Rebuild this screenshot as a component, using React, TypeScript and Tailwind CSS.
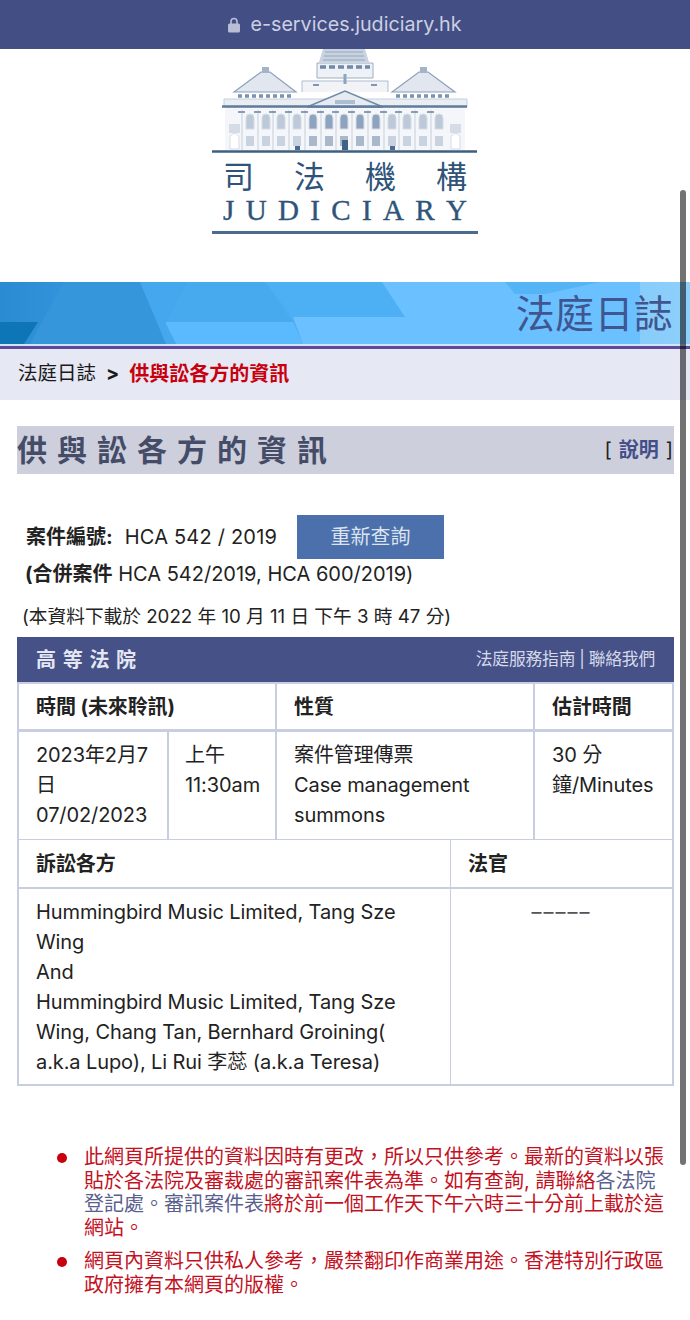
const windows = [250, 266, 281, 297, 313, 329, 344, 360, 376, 392, 407, 423, 439];

function BuildingLogo() {
  return (
    <svg width="266" height="104" viewBox="212 49 266 104" className="block blur-[0.35px]">
      {/* Dome */}
      <path d="M323 49h42l4 13h-50z" fill="#c9d3e0" />
      <path d="M325 52h38M324 56h40M323 60h42" stroke="#93a7bf" />
      <path d="M317 63h56v15h-56z" fill="#eef1f5" stroke="#9cafc5" />
      <path d="M320 67h50" stroke="#6f89a8" strokeWidth="3.5" strokeDasharray="6 3" />
      <path d="M302 92V81h86v11" fill="#f1f3f7" stroke="#aebdcf" />
      <path d="M345 74v10" stroke="#8ea3bd" strokeWidth="3" />
      <path d="M313 85h6M371 85h6" stroke="#7f97b3" strokeWidth="2" />
      {/* Side roofs */}
      <path d="M234 92l27-20h9l26 20z" fill="#e2e7ef" stroke="#8ba0ba" strokeWidth="1.2" />
      <path d="M392 92l27-20h9l27 20z" fill="#e2e7ef" stroke="#8ba0ba" strokeWidth="1.2" />
      <path d="M262 67h7v6h-7zM420 67h7v6h-7z" fill="#a3b3c8" />
      <path d="M238 96h56M396 96h56" stroke="#7a93b0" strokeWidth="3.5" strokeDasharray="4 3" />
      <path d="M224 99h243v8H224z" fill="#eaeef3" stroke="#c3cede" />
      {/* Central pediment */}
      <path d="M307 107l38-16 38 16z" fill="#e6ebf1" stroke="#6f89a8" strokeWidth="1.4" />
      <path d="M335 102h20" stroke="#aebdcf" strokeWidth="4" />
      <path d="M222 106.5h245" stroke="#5f7c9c" strokeWidth="2.5" />
      <path d="M335 110h20" stroke="#3f6285" strokeWidth="3" />
      {/* Facade */}
      <rect x="225" y="108" width="240" height="42" fill="#f5f6f9" />
      {windows.map((x, i) => (
        <g key={x}>
          <path
            d={`M${x - 4} 129v-11a4 4 0 0 1 8 0v11z`}
            fill={i > 3 && i < 9 ? "#8ea3bd" : "#bdc9d8"}
            stroke="#d5dce6"
          />
          <rect x={x - 4} y="136" width="8" height="10" fill={i > 3 && i < 9 ? "#a9b9cc" : "#c9d3e0"} />
          <path d={`M${x - 8} 110v40`} stroke="#dde3ea" strokeWidth="2" />
          <path d={`M${x - 12} 112h7`} stroke="#6f89a8" strokeWidth="1.6" />
        </g>
      ))}
      <path d="M229 124h11v9h-11zM450 124h11v9h-11z" fill="#d5dce6" />
      <path d="M230 149v-11a4.5 4.5 0 0 1 9 0v11zM451 149v-11a4.5 4.5 0 0 1 9 0v11z" fill="#fff" stroke="#d5dce6" />
      <rect x="342" y="140" width="6" height="10" fill="#3f6285" />
      <path d="M295 146h5v4h-5zM390 146h5v4h-5z" fill="#4b6c8e" />
      <path d="M212 151.5h265" stroke="#3c5f82" strokeWidth="2.5" />
    </svg>
  );
}

function Cell({ className, children }: { className: string; children: React.ReactNode }) {
  return <div className={`border-[#c9cde0] px-[17px] ${className}`}>{children}</div>;
}

export default function App() {
  return (
    <div className="relative h-[1320px] w-[690px] overflow-hidden bg-white font-['Inter','Noto_Sans_CJK_TC',sans-serif] text-[#222]">
      {/* Browser bar */}
      <div className="flex h-[49px] items-center justify-center gap-[10px] bg-[#434f84] text-[19.7px] text-[#ccd0e2]">
        <svg width="12" height="16" viewBox="0 0 12 16">
          <path d="M3 7V4.5a3 3 0 0 1 6 0V7" fill="none" stroke="#b9bed6" strokeWidth="1.6" />
          <rect y="6.5" width="12" height="9" rx="1.5" fill="#b9bed6" />
        </svg>
        <span>e-services.judiciary.hk</span>
      </div>

      {/* Logo */}
      <div className="flex h-[233px] flex-col items-center">
        <BuildingLogo />
        <div className="mt-[6px] flex w-[244px] justify-between text-[31px] leading-[36px] text-[#2f5479]">
          <span>司</span>
          <span>法</span>
          <span>機</span>
          <span>構</span>
        </div>
        <div className="flex w-[244px] justify-between font-['Liberation_Serif',serif] text-[29px] leading-[30px] text-[#2f5479] [-webkit-text-stroke:0.4px_#2f5479]">
          {"JUDICIARY".split("").map((c, i) => (
            <span key={i}>{c}</span>
          ))}
        </div>
        <div className="mt-[6px] h-[3px] w-[266px] bg-[#4a6c90]" />
      </div>

      {/* Banner */}
      <div className="relative flex h-[62px] items-center justify-end overflow-hidden bg-gradient-to-r from-[#2a8bd3] via-[#4fb0f6] via-45% to-[#8fd0fb] pr-[17px]">
        <svg className="absolute inset-0" width="690" height="62" viewBox="0 0 690 62">
          <path d="M0 40h38L24 62H0z" fill="#0e75b7" />
          <path d="M64 0h76l26 40 10 22H30l12-22z" fill="#3596dc" />
          <path d="M140 0h47l-22 40 11 22h-10z" fill="#45a8ee" />
          <path d="M187 0h78l28 40H165z" fill="#47a9ee" />
          <path d="M165 40h128l10 22H176z" fill="#5bbafd" />
          <path d="M265 0h117l23 35H293z" fill="#4dafF4" />
          <path d="M382 0H640V62H303l-10-27h112z" fill="#6bc0ff" />
          <path d="M505 0h95l-55 12h-30z" fill="#55b4f5" />
        </svg>
        <span className="relative text-[39px] leading-none tracking-[0.3px] text-[#3f5690]">法庭日誌</span>
      </div>
      <div className="h-[2px] bg-[#cfe6f2]" />
      <div className="h-[3px] bg-[#5e479e]" />

      {/* Breadcrumb */}
      <div className="flex h-[51px] items-center bg-[#e6e8f3] pb-[2px] pl-[18px] text-[19.5px] text-[#1a1a1a]">
        <span>法庭日誌</span>
        <span className="mx-[10px] font-bold">&gt;</span>
        <span className="text-[20px] font-bold text-[#c8000e]">供與訟各方的資訊</span>
      </div>

      {/* Title */}
      <div className="mt-[26px] mr-[16px] ml-[17px] flex h-[48px] items-center justify-between bg-[#cdd0dc] pr-[1px]">
        <span className="text-[30px] leading-none font-bold tracking-[10px] text-[#454c68]">供與訟各方的資訊</span>
        <span className="flex items-center gap-[7px] text-[20px] text-[#222]">
          <span>[</span>
          <span className="font-bold text-[#444f8a]">說明</span>
          <span>]</span>
        </span>
      </div>

      {/* Case info */}
      <div className="mt-[41px] flex items-center pl-[26px] text-[20px]">
        <span className="w-[271px]">
          <span className="mr-[12px] font-bold">案件編號:</span>
          <span className="tracking-[0.2px]">HCA 542 / 2019</span>
        </span>
        <div className="flex h-[44px] w-[147px] items-center justify-center bg-[#4c70ab] text-[20px] text-[#dbe3f0]">重新查詢</div>
      </div>
      <div className="mt-[1px] pl-[25px] text-[20px] leading-[28px]">
        <span className="font-bold">(合併案件</span> HCA 542/2019, HCA 600/2019)
      </div>
      <div className="mt-[16px] pl-[22px] text-[18.7px] leading-[26px]">(本資料下載於 2022 年 10 月 11 日 下午 3 時 47 分)</div>

      {/* Court header */}
      <div className="mt-[7px] mr-[16px] ml-[17px] flex h-[45px] items-center justify-between bg-[#455187] px-[19px] text-white">
        <span className="text-[20px] font-bold tracking-[6.7px] text-[#e4e7f2]">高等法院</span>
        <span className="flex items-center gap-[4px] text-[16.8px] tracking-[-0.2px] text-[#d5d9ea]">
          <span>法庭服務指南</span>
          <span>|</span>
          <span>聯絡我們</span>
        </span>
      </div>

      {/* Table */}
      <div className="mr-[16px] ml-[17px] border-x-[2px] border-y-[2px] border-[#c9cde0] text-[20px] leading-[30px] tracking-[-0.1px]">
        <div className="flex h-[48px] items-center border-b-[3px] border-[#c9cde0] font-bold">
          <Cell className="flex h-full w-[258px] items-center border-r-[2px]">時間 (未來聆訊)</Cell>
          <Cell className="flex h-full w-[258px] items-center border-r-[2px]">性質</Cell>
          <Cell className="flex h-full flex-1 items-center">估計時間</Cell>
        </div>
        <div className="flex h-[108px] border-b-[1px] border-[#c9cde0]">
          <Cell className="flex w-[150px] items-center border-r-[2px] pb-[1px]">
            <div>2023年2月7日<br />07/02/2023</div>
          </Cell>
          <Cell className="w-[108px] border-r-[2px] pt-[8px] pr-0 pl-[16px]">上午<br />11:30am</Cell>
          <Cell className="flex w-[258px] items-center border-r-[2px] pb-[1px]">
            <div>案件管理傳票<br />Case management summons</div>
          </Cell>
          <Cell className="flex-1 pt-[8px] pr-0">30 分鐘/Minutes</Cell>
        </div>
        <div className="flex h-[49px] border-b-[2px] border-[#c9cde0] font-bold">
          <Cell className="flex w-[432px] items-center border-r-[1px]">訴訟各方</Cell>
          <Cell className="flex flex-1 items-center">法官</Cell>
        </div>
        <div className="flex h-[195px]">
          <Cell className="w-[432px] border-r-[1px] pt-[8px] pr-[36px]">
            Hummingbird Music Limited, Tang Sze Wing
            <br />
            And
            <br />
            Hummingbird Music Limited, Tang Sze Wing, Chang Tan, Bernhard Groining( a.k.a Lupo), Li Rui 李蕊 (a.k.a Teresa)
          </Cell>
          <Cell className="flex-1 pt-[8px] text-center tracking-[2px] text-[#555]">–––––</Cell>
        </div>
      </div>

      {/* Notes */}
      <ul className="mt-[60px] mr-[24px] ml-[57px] flex list-none flex-col gap-[9px] text-[20px] leading-[23.7px] text-[#c3121f]">
        <li className="flex gap-[17px]">
          <span className="mt-[7px] h-[10px] w-[10px] shrink-0 rounded-full bg-[#c8000e]" />
          <span>
            {"此網頁所提供的資料因時有更改\uFF0C所以只供參考。最新的資料以張貼於各法院及審裁處的審訊案件表為準。如有查詢, 請聯絡"}
            <span className="text-[#5a5f8e]">各法院登記處。審訊案件表</span>
            將於前一個工作天下午六時三十分前上載於這網站。
          </span>
        </li>
        <li className="flex gap-[17px]">
          <span className="mt-[7px] h-[10px] w-[10px] shrink-0 rounded-full bg-[#c8000e]" />
          <span>{"網頁內資料只供私人參考\uFF0C嚴禁翻印作商業用途。香港特別行政區政府擁有本網頁的版權。"}</span>
        </li>
      </ul>

      {/* Scrollbar overlay */}
      <div className="absolute top-[190px] left-[680px] h-[975px] w-[6px] rounded-full bg-black/55" />
    </div>
  );
}
